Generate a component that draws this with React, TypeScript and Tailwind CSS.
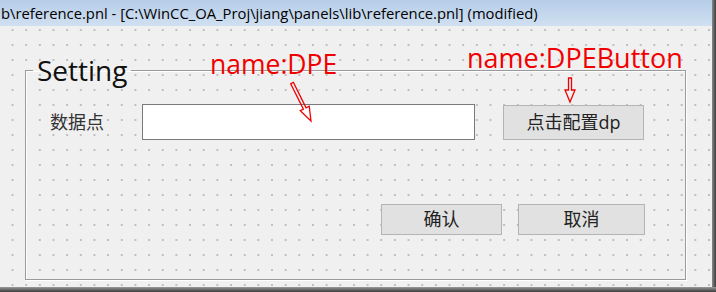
import React from "react";

const ui = { fontFamily: '"Open Sans", "Noto Sans", sans-serif' };
const cjk = { fontFamily: '"Open Sans", "Noto Sans CJK SC", sans-serif' };

function DpeArrow() {
  return (
    <svg width="34" height="44" viewBox="0 0 34 44" className="absolute left-[284px] top-[80px]">
      <polygon
        points="9.34,2.33 22.08,27.83 25.21,26.27 27,41 16.27,30.74 19.4,29.17 6.66,3.67"
        fill="none"
        stroke="#f00000"
        strokeWidth="1.3"
        strokeLinejoin="miter"
      />
    </svg>
  );
}

function ButtonArrow() {
  return (
    <svg width="16" height="28" viewBox="0 0 16 28" className="absolute left-[562px] top-[76px]">
      <polygon
        points="9.5,2 9.5,14 13,14 8,26 3,14 6.5,14 6.5,2"
        fill="none"
        stroke="#f00000"
        strokeWidth="1.3"
      />
    </svg>
  );
}

export default function App() {
  return (
    <div className="relative flex h-[292px] w-[716px] flex-col overflow-hidden bg-[#f0f0f0]" style={ui}>
      <div className="flex min-h-0 flex-1">
        <div className="flex w-[712px] flex-col">
          {/* title bar */}
          <div className="flex h-[26px] items-center bg-[linear-gradient(#b6cde8,#d0e0f1)] pl-[1px] text-[14.8px] text-black whitespace-nowrap">
            b\reference.pnl - [C:\WinCC_OA_Proj\jiang\panels\lib\reference.pnl] (modified)
          </div>

          {/* panel canvas */}
          <div className="flex-1 bg-[#f0f0f0] bg-[radial-gradient(circle,#8e8e8e_0.5px,transparent_1px)] bg-[size:13.67px_15px] bg-[position:5.7px_11.5px] pl-[25px] pt-[26px]">
            <fieldset className="m-0 h-[228px] w-[661px] border border-[#9a9a9a] p-0 shadow-[inset_1px_1px_0_#ffffff,1px_1px_0_#ffffff]">
              <legend className="ml-[7px] px-[4px] text-[28px] leading-[36px] text-[#111]">Setting</legend>

              <div className="mt-[16px] flex h-[36px] items-center pl-[24px]">
                <span className="w-[92px] text-[18px] text-[#333]" style={cjk}>
                  数据点
                </span>
                <div className="h-[36px] w-[333px] border border-[#7a7a7a] bg-white" />
                <button
                  className="ml-[28px] h-[35px] w-[141px] border border-[#b4b4b4] bg-[#e1e1e1] text-[18px] text-[#222]"
                  style={cjk}
                >
                  点击配置dp
                </button>
              </div>

              <div className="mt-[64px] flex justify-end gap-[16px] pr-[40px]">
                <button
                  className="h-[31px] w-[121px] border border-[#b4b4b4] bg-[#e1e1e1] text-[18px] text-[#222]"
                  style={cjk}
                >
                  确认
                </button>
                <button
                  className="h-[31px] w-[127px] border border-[#b4b4b4] bg-[#e1e1e1] text-[18px] text-[#222]"
                  style={cjk}
                >
                  取消
                </button>
              </div>
            </fieldset>
          </div>
        </div>
        {/* window shadow edge */}
        <div className="w-[4px] bg-[linear-gradient(90deg,#8a8a8a,#3c3c3c)]" />
      </div>
      <div className="h-[5px] bg-[linear-gradient(#9a9a9a,#3c3c3c)]" />

      {/* annotations */}
      <span className="absolute left-[210px] top-[51px] text-[26.5px] leading-[26px] text-[#f00000]">name:DPE</span>
      <DpeArrow />
      <span className="absolute left-[467px] top-[44px] text-[27px] leading-[27px] text-[#f00000]">name:DPEButton</span>
      <ButtonArrow />
    </div>
  );
}
